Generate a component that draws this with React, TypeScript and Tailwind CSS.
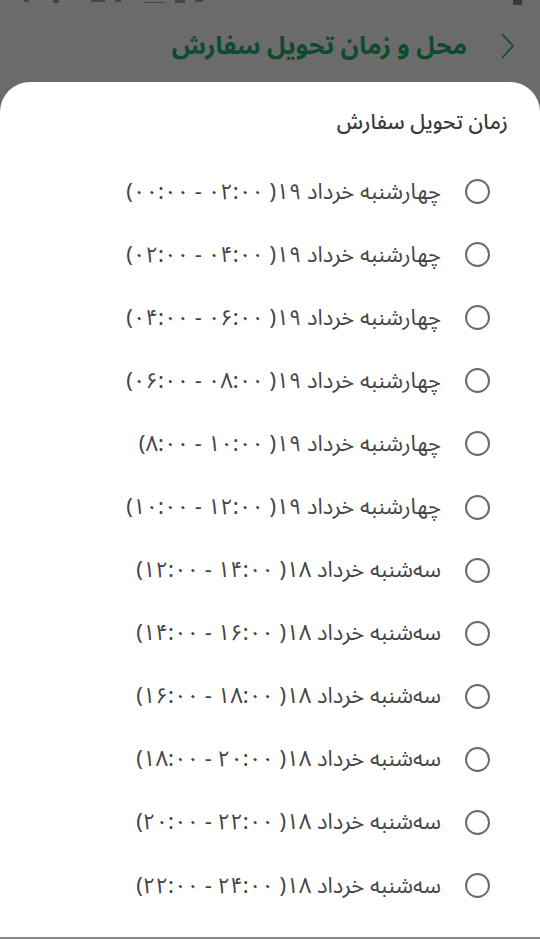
import React from 'react';

const slots = [
  { day: 'چهارشنبه', date: '۱۹', from: '۰۲:۰۰', to: '۰۰:۰۰' },
  { day: 'چهارشنبه', date: '۱۹', from: '۰۴:۰۰', to: '۰۲:۰۰' },
  { day: 'چهارشنبه', date: '۱۹', from: '۰۶:۰۰', to: '۰۴:۰۰' },
  { day: 'چهارشنبه', date: '۱۹', from: '۰۸:۰۰', to: '۰۶:۰۰' },
  { day: 'چهارشنبه', date: '۱۹', from: '۱۰:۰۰', to: '۸:۰۰' },
  { day: 'چهارشنبه', date: '۱۹', from: '۱۲:۰۰', to: '۱۰:۰۰' },
  { day: 'سه‌شنبه', date: '۱۸', from: '۱۴:۰۰', to: '۱۲:۰۰' },
  { day: 'سه‌شنبه', date: '۱۸', from: '۱۶:۰۰', to: '۱۴:۰۰' },
  { day: 'سه‌شنبه', date: '۱۸', from: '۱۸:۰۰', to: '۱۶:۰۰' },
  { day: 'سه‌شنبه', date: '۱۸', from: '۲۰:۰۰', to: '۱۸:۰۰' },
  { day: 'سه‌شنبه', date: '۱۸', from: '۲۲:۰۰', to: '۲۰:۰۰' },
  { day: 'سه‌شنبه', date: '۱۸', from: '۲۴:۰۰', to: '۲۲:۰۰' },
];

const font = { fontFamily: '"Noto Sans Arabic", "DejaVu Sans", sans-serif' };

export default function App() {
  return (
    <div dir="rtl" style={font} className="w-[540px] h-[939px] bg-[#6b6b6b] flex flex-col overflow-hidden">
      {/* status bar (cut off) */}
      <div dir="ltr" className="h-[8px] flex items-start px-[24px] gap-[10px]">
        <span className="w-[5px] h-[2px] bg-[#454545]" />
        <span className="w-[6px] h-[3px] bg-[#454545] ml-[14px]" />
        <span className="w-[14px] h-[2px] bg-[#454545] ml-[22px]" />
        <span className="w-[6px] h-[2px] bg-[#454545]" />
        <span className="w-[20px] h-[3px] border-b border-[#454545] ml-[14px]" />
        <span className="w-[10px] h-[3px] bg-[#454545]" />
        <span className="w-[8px] h-[2px] bg-[#454545]" />
        <span className="w-[9px] h-[5px] bg-[#3a3a3a] ml-auto mr-[-6px]" />
      </div>

      {/* header */}
      <div className="h-[74px] flex items-center gap-[34px] pr-[25px] pt-[2px]">
        <svg width="14" height="26" viewBox="0 0 14 26" className="shrink-0">
          <path d="M1.5 1.5 L12 13 L1.5 24.5" fill="none" stroke="#0f4a2f" strokeWidth="1.6" strokeLinecap="round" strokeLinejoin="round" />
        </svg>
        <span className="text-[25px] leading-[32px] font-bold text-[#0d4a2e]">محل و زمان تحویل سفارش</span>
      </div>

      {/* bottom sheet */}
      <div className="flex-1 bg-white rounded-t-[30px] flex flex-col border-b-2 border-[#8a8a8a]">
        <div className="pt-[25px] pr-[32px] text-[21px] leading-[30px] font-medium text-[#3a3a3a]">
          زمان تحویل سفارش
        </div>
        <ul className="mt-[23px] flex flex-col">
          {slots.map((s, i) => (
            <li key={i} className="h-[63.1px] flex items-center pr-[50px] gap-[24px]">
              <span className="w-[25px] h-[25px] rounded-full border-2 border-[#6b6b6b] shrink-0" />
              <span className="text-[22px] leading-[30px] text-[#454545]">
                {`${s.day} خرداد ${s.date}( ${s.from} - ${s.to})`}
              </span>
            </li>
          ))}
        </ul>
      </div>
    </div>
  );
}
